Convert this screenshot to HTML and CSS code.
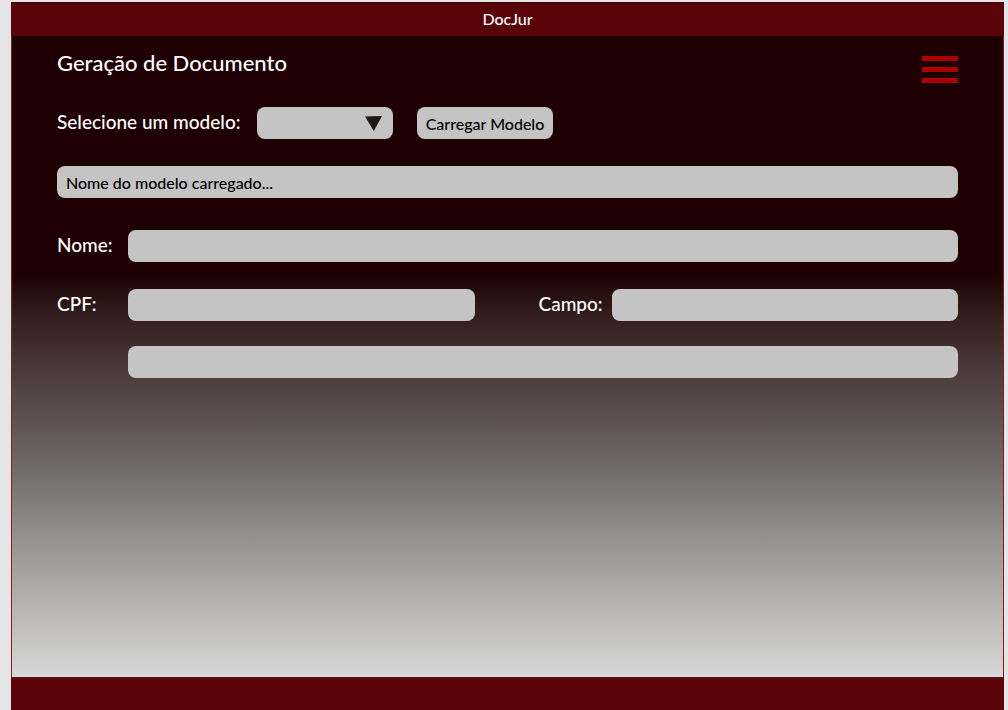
FILE: index.html
```html
<!DOCTYPE html>
<html lang="pt-BR">
<head>
  <meta charset="utf-8">
  <meta name="viewport" content="width=device-width, initial-scale=1">
  <title>DocJur</title>
  <link rel="stylesheet" href="styles.css">
</head>
<body class="page">
  <div class="frame">
    <header class="topbar">DocJur</header>
    <main class="content">
      <div class="heading">
        <h1 class="title">Geração de Documento</h1>
        <button class="menu" type="button" aria-label="Menu">
          <span class="menu-bar"></span>
          <span class="menu-bar"></span>
          <span class="menu-bar"></span>
        </button>
      </div>
      <form class="form">
        <div class="model-row">
          <label class="label model-label" for="modelo">Selecione um modelo:</label>
          <div class="picker">
            <select class="field" id="modelo"><option></option></select>
            <svg class="arrow" viewBox="0 0 17 15" aria-hidden="true"><path d="M0 .4 17 0 8.8 15Z"/></svg>
          </div>
          <button class="load" type="button">Carregar Modelo</button>
        </div>
        <input class="field loaded" type="text" aria-label="Modelo carregado" value="Nome do modelo carregado...">
        <div class="fields">
          <label class="label" for="nome">Nome:</label>
          <input class="field wide" id="nome" type="text">
          <label class="label" for="cpf">CPF:</label>
          <input class="field" id="cpf" type="text">
          <label class="label second" for="campo">Campo:</label>
          <input class="field" id="campo" type="text">
          <input class="field wide extra" type="text" aria-label="Campo adicional">
        </div>
      </form>
    </main>
    <footer class="bottombar"></footer>
  </div>
</body>
</html>
```
FILE: styles.css
```css
* {
  box-sizing: border-box;
}

.page {
  margin: 0;
  background: #e5e5e5;
  color: #fff;
  font-family: Lato, "Liberation Sans", sans-serif;
  font-weight: 500;
}

.frame {
  display: flex;
  flex-direction: column;
  min-height: 100vh;
  padding: 2px 4px 0 11px;
}

.topbar {
  height: 34px;
  background: #5a040a;
  border-top: 2px solid #48040a;
  font-size: 16px;
  line-height: 30px;
  text-align: center;
}

.content {
  flex: 1;
  padding: 12px 45px 24px;
  border: solid #7c1c22;
  border-width: 0 1px;
  background: linear-gradient(#1e0002 0%, #1e0002 37%, #301c1b 43%, #493a39 52%, #6b6260 65%, #999794 80%, #d8d8d8 100%);
}

.bottombar {
  height: 33px;
  background: #5a040a;
  border-top: 1px solid #4a1c1e;
}

.heading {
  display: flex;
  justify-content: space-between;
  height: 35px;
}

.title {
  margin: 0;
  font-size: 22px;
  font-weight: inherit;
  line-height: 30px;
}

.menu {
  display: flex;
  flex-direction: column;
  align-self: flex-end;
  justify-content: space-between;
  width: 36px;
  height: 27px;
  padding: 0;
  border: 0;
  background: none;
}

.menu-bar {
  height: 5px;
  background: #ac0000;
}

.form {
  margin-top: 24px;
}

.model-row {
  display: flex;
  align-items: center;
}

.label {
  padding-bottom: 2px;
  font-size: 19px;
  line-height: 28px;
  white-space: nowrap;
}

.model-label {
  width: 200px;
}

.picker {
  position: relative;
  width: 136px;
}

.field,
.load {
  display: block;
  width: 100%;
  min-width: 0;
  height: 32px;
  border: 0;
  border-radius: 8px;
  background: #c4c4c4;
  color: #000;
  font-family: inherit;
  font-size: 16px;
  font-weight: inherit;
  appearance: none;
}

.field {
  padding: 0 9px;
}

.arrow {
  position: absolute;
  top: 9px;
  right: 11px;
  width: 17px;
  height: 15px;
  fill: #1c1917;
  pointer-events: none;
}

.load {
  width: 136px;
  margin-left: 24px;
  padding: 0;
  white-space: nowrap;
}

.loaded {
  margin-top: 27px;
}

.fields {
  display: grid;
  grid-template-columns: 71px 1fr 137px 1fr;
  row-gap: 27px;
  align-items: center;
  margin-top: 32px;
}

.wide {
  grid-column: 2 / -1;
}

.second {
  padding-left: 64px;
}

.extra {
  margin-top: -2px;
}
```
